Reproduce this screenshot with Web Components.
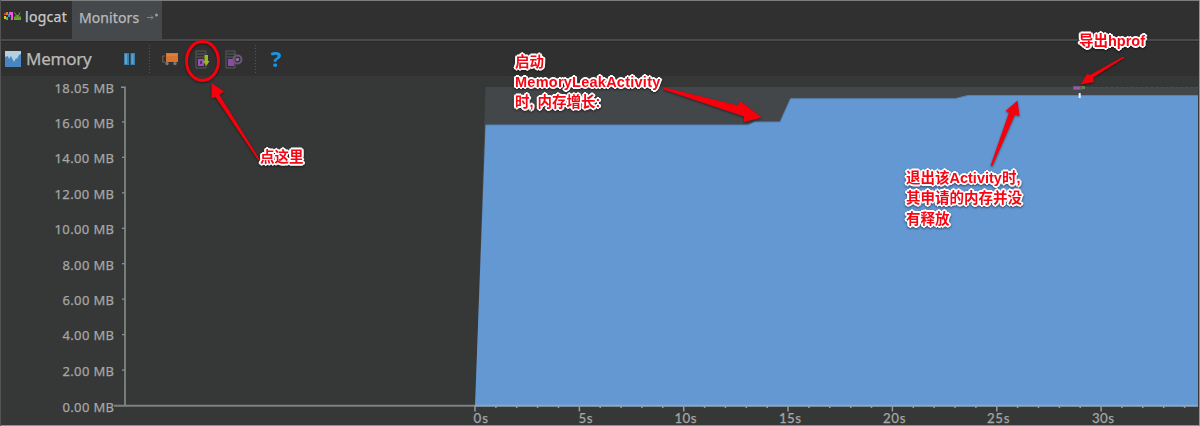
<!DOCTYPE html>
<html lang="zh-CN"><head><meta charset="utf-8"><title>Memory Monitor</title>
<style>html,body{margin:0;background:#353837}body{width:1200px;height:426px;overflow:hidden;font-family:"Noto Sans","Noto Sans CJK SC",sans-serif}</style>
</head><body>
<monitor-app></monitor-app>
<script>
const define=(name,html,after)=>customElements.define(name,class extends HTMLElement{
  constructor(){super();this.attachShadow({mode:'open'}).innerHTML=html;}
  connectedCallback(){if(after)after(this,this.shadowRoot);}
});

define('tool-tab',`<style>
:host{display:flex;align-items:center;box-sizing:border-box;height:39px;font-size:14px;color:#c9c9c9;padding-bottom:6px;white-space:nowrap;-webkit-text-stroke:.25px}
:host([active]){background:#45494b;color:#b9bbbc;margin-top:1px;padding-bottom:7px}
</style><slot></slot>`);

define('tab-strip',`<style>
:host{display:flex;box-sizing:border-box;height:42px;background:linear-gradient(#7c7e7d 0 1px,#303030 1px 39px,#484a4e 39px 41px,#29292b 41px)}
.log{width:72px;padding-left:4px;gap:4px;box-sizing:border-box}
.mon{width:90px;padding-left:7px;gap:8px;box-sizing:border-box}
.log span{letter-spacing:.3px}.mon span{letter-spacing:.1px}
svg{display:block;flex:none}
</style>
<tool-tab class="log"><svg width="17" height="11" viewBox="0 0 17 11"><path d="M0 2h2v2H0z" fill="#e33"/><path d="M0 5h2v3H0z" fill="#e9c126"/><path d="M2 1h2v3H2z" fill="#e67922"/><path d="M2 6h2v3H2z" fill="#4bbd4b"/><path d="M4 3h2v3H4z" fill="#398ee2"/><path d="M5 1h4v8H7V4H5z" fill="#e55bdb"/><path d="M10 9V6q3.2-4 7 0v3z" fill="#67a72a"/><path d="M10.500 1.500l2 3m3.500-3-1.500 3" fill="none" stroke="#67a72a"/><path d="M11.500 6h1m2 0h1" stroke="#263a12"/></svg><span>logcat</span></tool-tab>
<tool-tab class="mon" active><span>Monitors</span><svg width="14" height="10" viewBox="0 0 14 10"><path d="M0 5.500h6M4 3.500l2 2-2 2" fill="none" stroke="#85888a"/><circle cx="9.500" cy="3" r="1.500" fill="#9a9d9f"/></svg></tool-tab>`);

define('tool-bar',`<style>
:host{display:flex;align-items:center;box-sizing:border-box;height:34px;padding-left:5px;background:#303030;color:#b9b9b9}
.t{font-size:17px;line-height:20px;margin-left:5px;width:94px;letter-spacing:-.25px;-webkit-text-stroke:.25px}
svg{display:block;flex:none}
.sep{width:1px;height:28px;background:repeating-linear-gradient(#555 0 1px,transparent 1px 3px)}
.q{font:bold 21px/28px "Noto Sans",sans-serif;color:#1796e5;margin-left:15px;transform:scaleX(1.08)}
</style>
<svg width="16" height="16" viewBox="0 0 16 16"><path d="M0 0h16v16H0z" fill="#4786c0"/><path d="M0 0h16v3l-2 1-2 4-1-1-2 4-3-6-2 3-1-3-3 1z" fill="#b5cfe1"/></svg>
<span class="t">Memory</span>
<svg width="12" height="14" viewBox="0 0 12 14" style="margin-left:4px"><path d="M0 1h5v12H0zM6.500 1h4.500v12H6.500z" fill="#3d80ac"/><path d="M1 2h2v10H1zM7.500 2h2v10h-2z" fill="#5da4d1"/></svg>
<i class="sep" style="margin-left:13px"></i>
<svg width="17" height="15" viewBox="0 0 17 15" style="margin-left:12px"><path d="M4 1h12v9H4z" fill="#d7742e"/><path d="M5 3h10" stroke="#e58b4a"/><path d="M3 4H.8v6H3" fill="none" stroke="#77665b"/><circle cx="5" cy="11.500" r="1.700" fill="#777"/><circle cx="13" cy="11.500" r="1.700" fill="#777"/></svg>
<svg width="15" height="19" viewBox="0 0 15 19" style="margin-left:16px"><path d="M1 1h10v17H1zM2 4h8M2 7h8" fill="none" stroke="#5b595d"/><path d="M3 9h6v7H3z" fill="#9851b4"/><path d="M5 11h2v3H5z" fill="#533460"/><path d="M9.500 5h3.500v6h1.500l-3.200 5L8 11h1.500z" fill="#9ab821"/></svg>
<svg width="18" height="19" viewBox="0 0 18 19" style="margin-left:15px"><path d="M1 1h9v17H1zM2 4h8M2 7h8" fill="none" stroke="#5b595d"/><path d="M3 9h6v7H3z" fill="#8e4aaa"/><circle cx="12.500" cy="9.500" r="4" fill="none" stroke="#6c5a75" stroke-width="2"/><circle cx="12.500" cy="9.500" r="1.700" fill="#916ba4"/></svg>
<i class="sep" style="margin-left:12px"></i><span class="q">?</span>`);

define('memory-chart',`<style>
:host{display:block;height:350px}svg{display:block}
text{font-family:"Noto Sans",sans-serif;font-size:13px;fill:#a5a6a5;stroke:#a5a6a5;stroke-width:.25px}
text.s{font-family:Lato,sans-serif;font-size:13.3px}
</style><svg width="1200" height="350" viewBox="0 76 1200 350">
<path d="M0 76h1200v350H0z" fill="#353837"/><path d="M475.500 405L485.500 87H1198v318z" fill="#43474a"/>
<path d="M475 405.500L485.500 125H748l7-3H780L790.500 98.700H955l13-3.200H1198V405.500z" fill="#6498d3"/>
<path d="M485.500 125H748l7-3H780L790.500 98.700H955l13-3.200H1198" fill="none" stroke="#5583b4"/>
<path d="M1086 87.500H1198" stroke="#4c5052" stroke-dasharray="2 3"/>
<path d="M121 87.200h4M125 86.500V406" stroke="#8b8e8c" stroke-width="1.600" fill="none"/>
<path d="M114 405.700H475" stroke="#7e817f" stroke-width="2"/><path d="M475 405.700H1198" stroke="#91a8c5" stroke-width="2"/>
<g id="ticks"></g>
<path d="M1073 86h9v4h-9z" fill="#6f567b"/><path d="M1074 87h6v2h-6z" fill="#925dab"/><path d="M1082 86h3v3h-3z" fill="#67834c"/><path d="M1079.700 93v5" stroke="#e7f0fb" stroke-width="2"/>
<path d="M0 425.500H1200" stroke="#8f9290"/></svg>`,(host,root)=>{
  let s='';
  ['0.00','2.00','4.00','6.00','8.00','10.00','12.00','14.00','16.00','18.05'].forEach((v,i)=>{
    const y=i===9?87:405.5-i*35.45, w=v.length===5?59.5:51.5;
    s+=`<text x="${114-w}" y="${(y+(i?5.8:6.6)).toFixed(1)}" textLength="${w}">${v} MB</text>`;
    if(i&&i<9)s+=`<path d="M122 ${y.toFixed(1)}h3" stroke="#8b8e8c" stroke-width="1.3"/>`;
  });
  for(let i=0;i<35;i++){const x=(475+i*20.87).toFixed(1);s+=`<path d="M${x} ${i%5?406:405}v${i%5?2:6.5}" stroke="#999c9b" stroke-width="1.5"/>`;}
  [[0,473.5,14.5],[5,578.5,14],[10,674.5,22],[15,779,22],[20,883,22.5],[25,987,22.5],[30,1092,22]].forEach(([n,x,w])=>s+=`<text class="s" x="${x}" y="423.3" textLength="${w}">${n}s</text>`);
  root.getElementById('ticks').innerHTML=s;
});

define('note-label',`<style>
:host{position:absolute;display:block;white-space:pre;font:bold 14.5px/20px "Liberation Sans","Noto Sans CJK SC",sans-serif;color:#f80514;
text-shadow:2px 0 #fff,-2px 0 #fff,0 2px #fff,0 -2px #fff,1.4px 1.4px #fff,-1.4px 1.4px #fff,1.4px -1.4px #fff,-1.4px -1.4px #fff,1px 0 #fff,-1px 0 #fff,0 1px #fff,0 -1px #fff;filter:drop-shadow(0 1px 1px #0008)}
</style><slot></slot>`);

define('note-layer',`<style>
:host{position:absolute;inset:0;pointer-events:none}
svg{position:absolute;left:0;top:0;filter:drop-shadow(0 1px 1px #0007)}
.w{letter-spacing:.25px}
</style><svg width="1200" height="426" viewBox="0 0 1200 426"><ellipse cx="202.500" cy="61" rx="16" ry="19.500" fill="none" stroke="#f5000b" stroke-width="3"/>
<g fill="#f8000b"><path d="M211.500 83L224 91.500 219.500 95 260 160 258 160 215.500 97 211.500 98.500z"/><path d="M664.500 87.500L738 105.500 740 101 762 117.500 744 122 744 116.500 663.500 89.500z"/><path d="M1123.500 56.500L1124 58 1093 77.500 1094 82 1080.500 84.500 1087 74 1090 75z"/><path d="M1017.500 100.500L1019.500 116 1015 114.500 992.500 166 990.500 166 1009 112.500 1005.500 111z"/></g></svg>
<note-label style="left:260px;top:147px">点这里</note-label>
<note-label style="left:515px;top:52px">启动
<span class="w">MemoryLeakActivity</span>
时, 内存增长:</note-label>
<note-label style="left:1079px;top:31px">导出hprof</note-label>
<note-label style="left:906px;top:168px;line-height:20.4px">退出该Activity时,
其申请的内存并没
有释放</note-label>`);

define('monitor-app',`<style>
:host{display:flex;flex-direction:column;position:relative;width:1200px;height:426px;overflow:hidden;box-sizing:border-box}
.edge{position:absolute;inset:0 auto 0 0;width:1px;background:#515453}.right{position:absolute;inset:0 0 0 auto;width:1px;background:#929596}
</style><tab-strip></tab-strip><tool-bar></tool-bar><memory-chart></memory-chart><div class="edge"></div><div class="right"></div><note-layer></note-layer>`);
</script></body></html>
